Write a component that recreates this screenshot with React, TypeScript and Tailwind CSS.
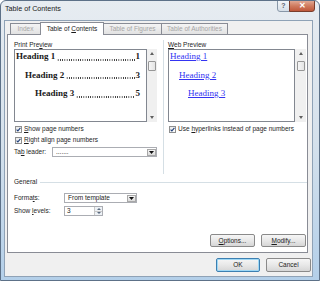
import React from "react";

const U = ({ children }: { children: React.ReactNode }) => <span className="underline underline-offset-[1px]">{children}</span>;

const Check = () => (
  <div className="w-[7px] h-[7px] border border-[#8e8f8f] bg-gradient-to-br from-[#e8e8e8] to-white flex items-center justify-center shrink-0">
    <svg width="5" height="5" viewBox="0 0 5 5">
      <path d="M0.6 2.6 L1.9 3.9 L4.4 0.9" stroke="#1f3f7a" strokeWidth="1.1" fill="none" />
    </svg>
  </div>
);

const Arrow = () => (
  <svg width="5" height="3" viewBox="0 0 5 3">
    <path d="M0 0 L5 0 L2.5 3 Z" fill="#111" />
  </svg>
);

const Combo = ({ w, text }: { w: string; text: string }) => (
  <div className={`${w} h-[10px] border border-[#abadb3] bg-white flex items-stretch`}>
    <div className="flex-1 pl-[3px] text-[6.5px] leading-[8px] text-[#222]">{text}</div>
    <div className="w-[9px] m-[0.5px] border border-[#a8a8a8] bg-gradient-to-b from-[#f4f4f4] to-[#dcdcdc] flex items-center justify-center">
      <Arrow />
    </div>
  </div>
);

const Scroll = ({ w }: { w: string }) => (
  <div className={`${w} h-full bg-[#f0f0f0] flex flex-col items-center`}>
    <div className="h-[9px] flex items-center justify-center">
      <svg width="4" height="3" viewBox="0 0 4 3"><path d="M0 3 L4 3 L2 0 Z" fill="#606060" /></svg>
    </div>
    <div className="w-[8px] h-[10px] mt-[3px] rounded-[1px] border border-[#979797] bg-gradient-to-r from-[#f6f6f6] to-[#e4e4e4]" />
    <div className="flex-1" />
    <div className="h-[9px] flex items-center justify-center">
      <svg width="4" height="3" viewBox="0 0 4 3"><path d="M0 0 L4 0 L2 3 Z" fill="#606060" /></svg>
    </div>
  </div>
);

const Btn = ({ w, children, def }: { w: string; children: React.ReactNode; def?: boolean }) => (
  <div
    className={`${w} h-full rounded-[2px] border ${def ? "border-[#3c7fb1] shadow-[inset_0_0_0_1px_#9fd8f5]" : "border-[#8a8a8a]"} bg-gradient-to-b from-[#f6f6f6] via-[#e8e8e8] to-[#d6d6d6] flex items-center justify-center text-[6.5px] text-[#1a1a1a]`}
  >
    {children}
  </div>
);

const PLine = ({ text, num, pl }: { text: string; num: string; pl: string }) => (
  <div className={`flex items-end font-bold text-[9px] leading-[10px] font-['Liberation_Serif',serif] text-[#1a1a1a] ${pl} pr-[6px]`}>
    <span className="whitespace-nowrap">{text}</span>
    <span className="flex-1 h-[10px] ml-[2px] mr-[0.5px] bg-[radial-gradient(circle,#222_0.65px,transparent_0.9px)] bg-[length:2.25px_2px] bg-repeat-x bg-[position:0_7.5px]" />
    <span>{num}</span>
  </div>
);

export default function App() {
  return (
    <div className="w-[320px] h-[281px] overflow-hidden rounded-t-[6px] border border-[#5d7188] bg-gradient-to-b from-[#e7ecf1] via-[#d5e1ec] to-[#b3cfe9] flex flex-col font-['Liberation_Sans',Arial,sans-serif] text-[#1e1e1e]">
      {/* title bar */}
      <div className="h-[19px] flex items-start justify-between pl-[4px] pr-[4px] shrink-0">
        <div className="text-[7.2px] leading-[9px] mt-[3px] text-[#1a1a1a]">Table of Contents</div>
        <div className="flex -mt-[1px]">
          <div className="w-[13px] h-[12px] border border-[#8897a8] rounded-bl-[3px] bg-gradient-to-b from-[#f2f5f8] to-[#d6dfe8] flex items-center justify-center text-[7px] font-bold text-[#58626e]">?</div>
          <div className="w-[26px] h-[12px] border border-[#7a3d2c] -ml-px rounded-br-[3px] bg-gradient-to-b from-[#e0a793] via-[#cf7a5e] to-[#bf573a] flex items-center justify-center text-[7.5px] font-bold text-white">✕</div>
        </div>
      </div>
      {/* client */}
      <div className="ml-[3px] mr-[6px] mb-[3px] flex-1 bg-[#f0f0f0] border border-[#8fa2b6] flex flex-col">
        <div className="ml-[2px] mr-[4px] mt-[1px] flex flex-col">
          {/* tabs */}
          <div className="h-[12px] flex items-end pl-[3px]">
            <div className="w-[31px] h-[11px] border border-b-0 border-[#898c95] bg-gradient-to-b from-[#f4f4f4] to-[#e2e2e2] text-[6.5px] text-[#a6a6a6] flex items-center justify-center">Index</div>
            <div className="relative z-10 w-[64px] h-[13px] -mb-px -ml-px border border-b-0 border-[#898c95] bg-white text-[6.5px] text-[#1a1a1a] flex items-center justify-center">
              <span className="leading-[8px]">Table of <U>C</U>ontents</span>
            </div>
            <div className="w-[59px] h-[11px] -ml-px border border-b-0 border-[#898c95] bg-gradient-to-b from-[#f4f4f4] to-[#e2e2e2] text-[6.5px] text-[#a6a6a6] flex items-center justify-center">Table of Figures</div>
            <div className="w-[67px] h-[11px] -ml-px border border-b-0 border-[#898c95] bg-gradient-to-b from-[#f4f4f4] to-[#e2e2e2] text-[6.5px] text-[#a6a6a6] flex items-center justify-center">Table of Authorities</div>
          </div>
          {/* panel */}
          <div className="h-[219px] border border-[#898c95] bg-white flex flex-col text-[6.5px]">
            <div className="mt-[5px] h-[134px] flex">
              {/* left */}
              <div className="ml-[6px] w-[143px] flex flex-col">
                <div className="h-[9px] leading-[9px]">Print Pre<U>v</U>iew</div>
                <div className="h-[73px] flex">
                  <div className="w-[133px] h-full border border-[#828790] bg-white flex flex-col gap-[8.5px] pt-[1px]">
                    <PLine text="Heading 1" num="1" pl="pl-[1px]" />
                    <PLine text="Heading 2" num="3" pl="pl-[10px]" />
                    <PLine text="Heading 3" num="5" pl="pl-[20px]" />
                  </div>
                  <Scroll w="w-[10px]" />
                </div>
                <div className="mt-[3px] h-[8px] flex items-center gap-[2px] pl-[1px]">
                  <Check />
                  <span className="leading-[8px]"><U>S</U>how page numbers</span>
                </div>
                <div className="mt-[3px] h-[8px] flex items-center gap-[2px] pl-[1px]">
                  <Check />
                  <span className="leading-[8px]"><U>R</U>ight align page numbers</span>
                </div>
                <div className="mt-[3px] h-[10px] flex items-center">
                  <span className="w-[38px] leading-[8px]">Ta<U>b</U> leader:</span>
                  <Combo w="w-[105px]" text="......." />
                </div>
              </div>
              {/* separator */}
              <div className="ml-[6px] w-px h-full bg-[#d5dfe5]" />
              {/* right */}
              <div className="ml-[4px] w-[138px] flex flex-col">
                <div className="h-[9px] leading-[9px]"><U>W</U>eb Preview</div>
                <div className="h-[73px] flex">
                  <div className="w-[127px] h-full border border-[#828790] bg-white flex flex-col gap-[8.5px] pt-[1px] font-['Liberation_Serif',serif] text-[9px] leading-[10px] text-[#3434f2]">
                    <div className="pl-[1px]"><span className="underline">Heading 1</span></div>
                    <div className="pl-[10px]"><span className="underline">Heading 2</span></div>
                    <div className="pl-[19px]"><span className="underline">Heading 3</span></div>
                  </div>
                  <Scroll w="w-[11px]" />
                </div>
                <div className="mt-[3px] h-[8px] flex items-center gap-[2px] pl-[1px]">
                  <Check />
                  <span className="leading-[8px]">Use <U>h</U>yperlinks instead of page numbers</span>
                </div>
              </div>
            </div>
            {/* General */}
            <div className="mt-[4px] h-[8px] flex items-center">
              <span className="ml-[6px] leading-[8px]">General</span>
              <div className="flex-1 ml-[3px] h-px bg-[#d5dfe5]" />
            </div>
            <div className="mt-[7px] h-[10px] flex items-center ml-[6px]">
              <span className="w-[50px] leading-[8px]">Forma<U>t</U>s:</span>
              <Combo w="w-[73px]" text="From template" />
            </div>
            <div className="mt-[3px] h-[10px] flex items-center ml-[6px]">
              <span className="w-[50px] leading-[8px]">Show <U>l</U>evels:</span>
              <div className="w-[39px] h-[10px] border border-[#abadb3] bg-white flex">
                <div className="flex-1 pl-[2px] leading-[8px]">3</div>
                <div className="w-[8px] flex flex-col border-l border-[#c8c8c8]">
                  <div className="flex-1 bg-[#eef2f6] flex items-center justify-center border-b border-[#c8c8c8]">
                    <svg width="4" height="2" viewBox="0 0 4 2"><path d="M0 2 L4 2 L2 0 Z" fill="#5b6b80" /></svg>
                  </div>
                  <div className="flex-1 bg-[#eef2f6] flex items-center justify-center">
                    <svg width="4" height="2" viewBox="0 0 4 2"><path d="M0 0 L4 0 L2 2 Z" fill="#5b6b80" /></svg>
                  </div>
                </div>
              </div>
            </div>
            <div className="mt-[18px] h-[13px] flex justify-end gap-[6px] mr-[1px]">
              <Btn w="w-[45px]"><U>O</U>ptions...</Btn>
              <Btn w="w-[45px]"><U>M</U>odify...</Btn>
            </div>
          </div>
          {/* bottom buttons */}
          <div className="mt-[5px] h-[14px] flex justify-end gap-[6px] -mr-[3px]">
            <Btn w="w-[44px]" def>OK</Btn>
            <Btn w="w-[45px]">Cancel</Btn>
          </div>
        </div>
      </div>
    </div>
  );
}
